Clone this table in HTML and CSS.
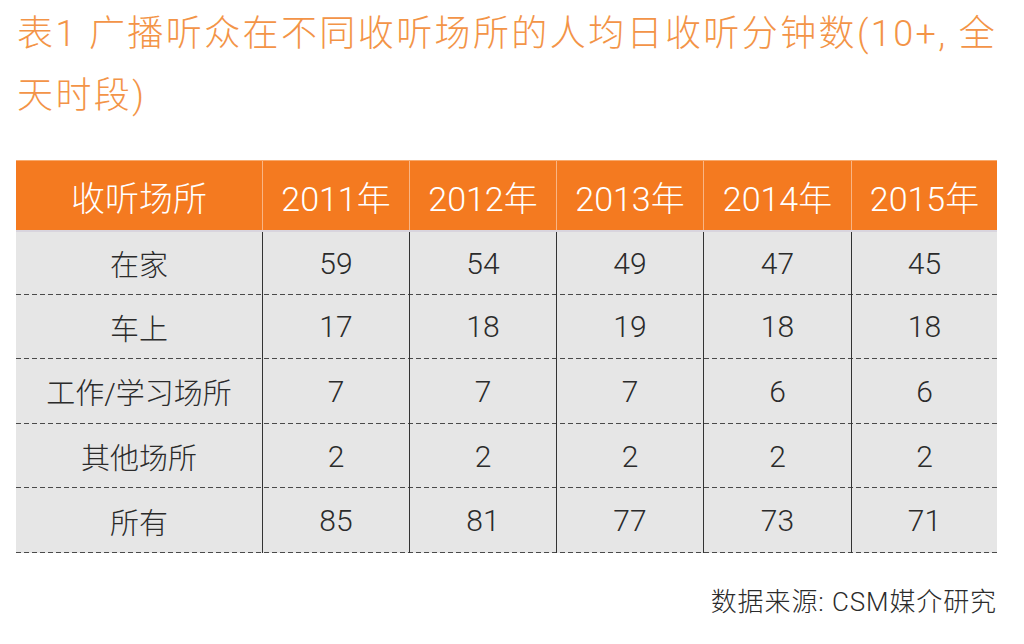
FILE: index.html
```html
<!DOCTYPE html>
<html lang="zh-CN">
<head>
<meta charset="utf-8">
<title>表1 广播听众在不同收听场所的人均日收听分钟数</title>
<link rel="stylesheet" href="styles.css">
</head>
<body>
<div class="page">
  <h1 class="title">表1 广播听众在不同收听场所的人均日收听分钟数(10+, 全<br>天时段)</h1>
  <div class="tbl">
    <div class="row head">
      <div class="cell">收听场所</div>
      <div class="cell">2011年</div>
      <div class="cell">2012年</div>
      <div class="cell">2013年</div>
      <div class="cell">2014年</div>
      <div class="cell">2015年</div>
    </div>
    <div class="row body first">
      <div class="cell label">在家</div>
      <div class="cell">59</div>
      <div class="cell">54</div>
      <div class="cell">49</div>
      <div class="cell">47</div>
      <div class="cell">45</div>
    </div>
    <div class="row body">
      <div class="cell label">车上</div>
      <div class="cell">17</div>
      <div class="cell">18</div>
      <div class="cell">19</div>
      <div class="cell">18</div>
      <div class="cell">18</div>
    </div>
    <div class="row body">
      <div class="cell label">工作/学习场所</div>
      <div class="cell">7</div>
      <div class="cell">7</div>
      <div class="cell">7</div>
      <div class="cell">6</div>
      <div class="cell">6</div>
    </div>
    <div class="row body">
      <div class="cell label">其他场所</div>
      <div class="cell">2</div>
      <div class="cell">2</div>
      <div class="cell">2</div>
      <div class="cell">2</div>
      <div class="cell">2</div>
    </div>
    <div class="row body">
      <div class="cell label">所有</div>
      <div class="cell">85</div>
      <div class="cell">81</div>
      <div class="cell">77</div>
      <div class="cell">73</div>
      <div class="cell">71</div>
    </div>
  </div>
  <div class="source">数据来源: CSM媒介研究</div>
</div>
</body>
</html>
```
FILE: styles.css
```css
html, body {
  margin: 0;
  padding: 0;
  background: #ffffff;
}
body {
  font-family: Roboto, "Liberation Sans", "Noto Sans CJK SC", sans-serif;
  font-weight: 300;
  color: #2b2b2b;
}
.page {
  width: 1024px;
  height: 644px;
  overflow: hidden;
}
.title {
  margin: 0;
  padding: 3px 0 0 17px;
  font-size: 36px;
  font-weight: 300;
  letter-spacing: 2.4px;
  line-height: 62px;
  color: #f39447;
  white-space: nowrap;
}
.tbl {
  margin: 33px 0 0 16px;
  width: 981px;
}
.row {
  display: grid;
  grid-template-columns: 246px 147px 147px 147px 148px 146px;
}
.cell {
  display: flex;
  align-items: center;
  justify-content: center;
}
.head {
  height: 70px;
  background: #f47a20;
  color: #ffffff;
  font-size: 34px;
  box-sizing: border-box;
  border-top: 1px solid #f8a96c;
}
.head .cell {
  padding-top: 2px;
}
.head .cell + .cell {
  border-left: 1px solid #f9b584;
}
.body {
  height: 64.6px;
  background-color: #e6e6e6;
  background-image: repeating-linear-gradient(to right, #4a4a4a 0 5px, transparent 5px 8px);
  background-size: 100% 1px;
  background-position: left bottom;
  background-repeat: no-repeat;
  font-size: 30px;
}
.body.first {
  border-top: 2px solid #d9d5de;
  height: 62.6px;
}
.body .cell + .cell {
  border-left: 1px solid #333333;
}
.body .label {
  font-size: 29px;
}
.source {
  margin-top: 34px;
  padding-right: 27px;
  text-align: right;
  font-size: 26px;
  line-height: 31px;
  letter-spacing: 0.9px;
  color: #2b2b2b;
}
```
